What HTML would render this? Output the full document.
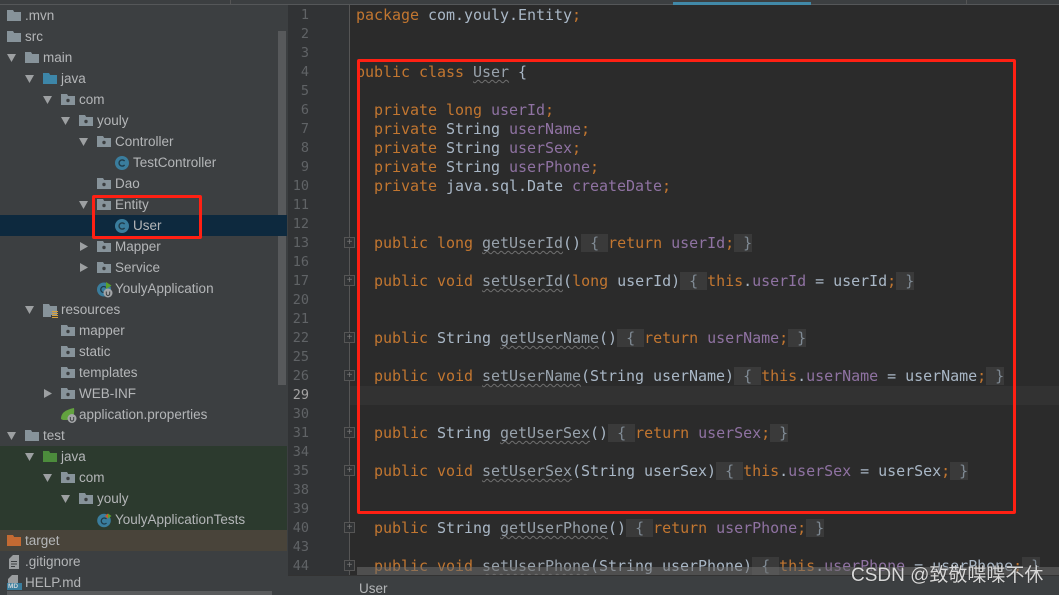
<!DOCTYPE html>
<html><head><meta charset="utf-8">
<style>
html,body{margin:0;padding:0;background:#2b2b2b}
#p{position:relative;width:1059px;height:595px;overflow:hidden;background:#2b2b2b}
.a{position:absolute}
.t{position:absolute;font:13.5px/21px "Liberation Sans",sans-serif;color:#b4b6b8;white-space:pre;height:21px}
.n{position:absolute;left:280px;width:29px;text-align:right;font:13.5px/19px "DejaVu Sans Mono",monospace;color:#606366;height:19px;margin-top:1px}
.c{position:absolute;font:15px/19px "DejaVu Sans Mono",monospace;letter-spacing:-.03px;color:#a9b7c6;white-space:pre;height:19px;margin:1px 0 0}
.c i{font-style:normal;color:#c27630}
.c b{font-weight:normal;color:#8f72a2}
.c u{color:#98a2ac;text-decoration:underline wavy #6f6f6f 1px;text-underline-offset:2px;text-decoration-skip-ink:none}
.c s{text-decoration:none;background:#3a3a3a;color:#7f8a94}
.f{position:absolute;left:344px;width:9px;height:9px;border:1px solid #555;background:#313335;color:#777;font:10px/9px "Liberation Sans",sans-serif;text-align:center}
svg.i{position:absolute;overflow:visible}
</style></head><body>
<div id="p">
<svg width="0" height="0" style="position:absolute">
<defs>
<symbol id="fo" viewBox="0 0 14 11"><path d="M0 0h6l1.2 2H14v9H0z" fill="#87939a"/></symbol>
<symbol id="pk" viewBox="0 0 14 11"><path d="M0 0h6l1.2 2H14v9H0z" fill="#87939a"/><circle cx="7" cy="6.5" r="1.7" fill="#3c3f41"/></symbol>
<symbol id="dn" viewBox="0 0 9 8"><path d="M0 0h9L4.5 8z" fill="#9da0a2"/></symbol>
<symbol id="rt" viewBox="0 0 8 9"><path d="M0 0l8 4.5L0 9z" fill="#9da0a2"/></symbol>
<symbol id="cl" viewBox="0 0 14 14"><circle cx="7" cy="7" r="7" fill="#3a7d9d"/><path d="M9.6 5.1A3.1 3.1 0 1 0 9.6 8.9" fill="none" stroke="#1f3a48" stroke-width="1.4"/></symbol>
</defs>
</svg>

<!-- sidebar -->
<div class="a" style="left:0;top:0;width:288px;height:595px;background:#3c3f41"></div>
<div class="a" style="left:0;top:0;width:1059px;height:4px;background:#3c3f41"></div>
<div class="a" style="left:0;top:4px;width:1059px;height:1px;background:#555759"></div>
<div class="a" style="left:230px;top:0;width:1px;height:4px;background:#555"></div>
<div class="a" style="left:673px;top:2px;width:138px;height:3px;background:#4189a8"></div>
<div class="a" style="left:966px;top:0;width:1px;height:4px;background:#555"></div>
<div class="a" style="left:278px;top:31px;width:8px;height:354px;background:#57595b"></div>
<div class="a" style="left:0;top:215px;width:287px;height:21px;background:#0d293e"></div>
<div class="a" style="left:0;top:446px;width:287px;height:84px;background:#2c3a2e"></div>
<div class="a" style="left:0;top:530px;width:287px;height:21px;background:#49443a"></div>
<div class="a" style="left:7px;top:591px;width:265px;height:4px;background:#595b5d"></div>

<!-- tree arrows -->
<svg class="i" style="left:7px;top:54px" width="9" height="8"><use href="#dn"/></svg>
<svg class="i" style="left:25px;top:75px" width="9" height="8"><use href="#dn"/></svg>
<svg class="i" style="left:43px;top:96px" width="9" height="8"><use href="#dn"/></svg>
<svg class="i" style="left:61px;top:117px" width="9" height="8"><use href="#dn"/></svg>
<svg class="i" style="left:79px;top:138px" width="9" height="8"><use href="#dn"/></svg>
<svg class="i" style="left:79px;top:201px" width="9" height="8"><use href="#dn"/></svg>
<svg class="i" style="left:80px;top:242px" width="8" height="9"><use href="#rt"/></svg>
<svg class="i" style="left:80px;top:263px" width="8" height="9"><use href="#rt"/></svg>
<svg class="i" style="left:25px;top:306px" width="9" height="8"><use href="#dn"/></svg>
<svg class="i" style="left:44px;top:389px" width="8" height="9"><use href="#rt"/></svg>
<svg class="i" style="left:7px;top:432px" width="9" height="8"><use href="#dn"/></svg>
<svg class="i" style="left:25px;top:453px" width="9" height="8"><use href="#dn"/></svg>
<svg class="i" style="left:43px;top:474px" width="9" height="8"><use href="#dn"/></svg>
<svg class="i" style="left:61px;top:495px" width="9" height="8"><use href="#dn"/></svg>

<!-- tree icons -->
<svg class="i" style="left:7px;top:10px" width="14" height="11"><use href="#fo"/></svg>
<svg class="i" style="left:7px;top:31px" width="14" height="11"><use href="#fo"/></svg>
<svg class="i" style="left:25px;top:52px" width="14" height="11"><use href="#fo"/></svg>
<svg class="i" style="left:43px;top:73px" width="14" height="11"><path d="M0 0h6l1.200 2H14v9H0z" fill="#3d86a8"/></svg>
<svg class="i" style="left:61px;top:94px" width="14" height="11"><use href="#pk"/></svg>
<svg class="i" style="left:79px;top:115px" width="14" height="11"><use href="#pk"/></svg>
<svg class="i" style="left:97px;top:136px" width="14" height="11"><use href="#pk"/></svg>
<svg class="i" style="left:115px;top:156px" width="14" height="14"><use href="#cl"/></svg>
<svg class="i" style="left:97px;top:178px" width="14" height="11"><use href="#pk"/></svg>
<svg class="i" style="left:97px;top:199px" width="14" height="11"><use href="#pk"/></svg>
<svg class="i" style="left:115px;top:219px" width="14" height="14"><use href="#cl"/></svg>
<svg class="i" style="left:97px;top:241px" width="14" height="11"><use href="#pk"/></svg>
<svg class="i" style="left:97px;top:262px" width="14" height="11"><use href="#pk"/></svg>
<svg class="i" style="left:97px;top:282px" width="16" height="15"><circle cx="7" cy="7.500" r="7" fill="#3a7d9d"/><path d="M9 5.500A3 3 0 1 0 9 9.500" fill="none" stroke="#1f3a48" stroke-width="1.300"/><path d="M9 0l5.500 3.500L9 7z" fill="#5aa02c"/><circle cx="11" cy="11" r="4.500" fill="#a3a5a7"/><path d="M9.300 9.500v2.300a1.700 1.700 0 0 0 3.400 0V9.500" fill="none" stroke="#3c3f41" stroke-width="1"/></svg>
<svg class="i" style="left:43px;top:304px" width="16" height="15"><path d="M0 0h6l1.200 2H14v9H8v2H0z" fill="#87939a"/><path d="M9 7.500h6M9 9.500h6M9 11.500h6M9 13.500h6" stroke="#d8a13a" stroke-width="1"/></svg>
<svg class="i" style="left:61px;top:325px" width="14" height="11"><use href="#pk"/></svg>
<svg class="i" style="left:61px;top:346px" width="14" height="11"><use href="#pk"/></svg>
<svg class="i" style="left:61px;top:367px" width="14" height="11"><use href="#pk"/></svg>
<svg class="i" style="left:61px;top:388px" width="14" height="11"><use href="#pk"/></svg>
<svg class="i" style="left:61px;top:408px" width="16" height="15"><path d="M0 11C0 5 4 2 13 0c1 6-1 11-7 12H2z" fill="#62a23f"/><circle cx="11" cy="10.500" r="4.500" fill="#a3a5a7"/><path d="M9.300 9v2.300a1.700 1.700 0 0 0 3.400 0V9" fill="none" stroke="#3c3f41" stroke-width="1"/></svg>
<svg class="i" style="left:25px;top:430px" width="14" height="11"><use href="#fo"/></svg>
<svg class="i" style="left:43px;top:451px" width="14" height="11"><path d="M0 0h6l1.200 2H14v9H0z" fill="#4c8c3c"/></svg>
<svg class="i" style="left:61px;top:472px" width="14" height="11"><use href="#pk"/></svg>
<svg class="i" style="left:79px;top:493px" width="14" height="11"><use href="#pk"/></svg>
<svg class="i" style="left:97px;top:513px" width="15" height="14"><circle cx="7" cy="7.500" r="6.800" fill="#3a7d9d"/><path d="M9.500 6A3 3 0 1 0 9.500 10" fill="none" stroke="#1f3a48" stroke-width="1.300"/><path d="M8 3l3-2.500V5.500z" fill="#cc5a2c"/><path d="M11 0.500l3.500 2.500L11 5.500z" fill="#5aa02c"/></svg>
<svg class="i" style="left:7px;top:535px" width="14" height="11"><path d="M0 0h6l1.200 2H14v9H0z" fill="#c36a33"/></svg>
<svg class="i" style="left:9px;top:555px" width="10" height="14"><path d="M4 0h6v14H0V4z" fill="#9a9d9f"/><path d="M2 6.500h6M2 9h6M2 11.500h4" stroke="#3c3f41" stroke-width="1"/></svg>
<svg class="i" style="left:7px;top:575px" width="15" height="15"><path d="M5 0h6v8H1V4z" fill="#9a9d9f"/><rect x="0" y="8" width="15" height="7" fill="#3a7d9d"/></svg>
<div class="a" style="left:8px;top:583px;font:bold 6.500px/7px 'Liberation Sans',sans-serif;color:#cfd6da">MD</div>

<!-- tree labels -->
<div class="t" style="left:25px;top:5px">.mvn</div>
<div class="t" style="left:25px;top:26px">src</div>
<div class="t" style="left:43px;top:47px">main</div>
<div class="t" style="left:61px;top:68px">java</div>
<div class="t" style="left:79px;top:89px">com</div>
<div class="t" style="left:97px;top:110px">youly</div>
<div class="t" style="left:115px;top:131px">Controller</div>
<div class="t" style="left:133px;top:152px">TestController</div>
<div class="t" style="left:115px;top:173px">Dao</div>
<div class="t" style="left:115px;top:194px">Entity</div>
<div class="t" style="left:133px;top:215px">User</div>
<div class="t" style="left:115px;top:236px">Mapper</div>
<div class="t" style="left:115px;top:257px">Service</div>
<div class="t" style="left:115px;top:278px">YoulyApplication</div>
<div class="t" style="left:61px;top:299px">resources</div>
<div class="t" style="left:79px;top:320px">mapper</div>
<div class="t" style="left:79px;top:341px">static</div>
<div class="t" style="left:79px;top:362px">templates</div>
<div class="t" style="left:79px;top:383px">WEB-INF</div>
<div class="t" style="left:79px;top:404px">application.properties</div>
<div class="t" style="left:43px;top:425px">test</div>
<div class="t" style="left:61px;top:446px">java</div>
<div class="t" style="left:79px;top:467px">com</div>
<div class="t" style="left:97px;top:488px">youly</div>
<div class="t" style="left:115px;top:509px">YoulyApplicationTests</div>
<div class="t" style="left:25px;top:530px">target</div>
<div class="t" style="left:25px;top:551px">.gitignore</div>
<div class="t" style="left:25px;top:572px">HELP.md</div>

<!-- gutter -->
<div class="a" style="left:288px;top:5px;width:62px;height:571px;background:#313335"></div>
<div class="a" style="left:349px;top:5px;width:1px;height:571px;background:#555555"></div>
<div class="a" style="left:350px;top:386px;width:709px;height:19px;background:#323232"></div>

<div class="n" style="top:5px">1</div>
<div class="n" style="top:24px">2</div>
<div class="n" style="top:43px">3</div>
<div class="n" style="top:62px">4</div>
<div class="n" style="top:81px">5</div>
<div class="n" style="top:100px">6</div>
<div class="n" style="top:119px">7</div>
<div class="n" style="top:138px">8</div>
<div class="n" style="top:157px">9</div>
<div class="n" style="top:176px">10</div>
<div class="n" style="top:195px">11</div>
<div class="n" style="top:214px">12</div>
<div class="n" style="top:233px">13</div>
<div class="n" style="top:252px">16</div>
<div class="n" style="top:271px">17</div>
<div class="n" style="top:290px">20</div>
<div class="n" style="top:309px">21</div>
<div class="n" style="top:328px">22</div>
<div class="n" style="top:347px">25</div>
<div class="n" style="top:366px">26</div>
<div class="n" style="top:385px;color:#a4a3a3">29</div>
<div class="n" style="top:404px">30</div>
<div class="n" style="top:423px">31</div>
<div class="n" style="top:442px">34</div>
<div class="n" style="top:461px">35</div>
<div class="n" style="top:480px">38</div>
<div class="n" style="top:499px">39</div>
<div class="n" style="top:518px">40</div>
<div class="n" style="top:537px">43</div>
<div class="n" style="top:556px">44</div>

<div class="f" style="top:237px">+</div>
<div class="f" style="top:275px">+</div>
<div class="f" style="top:332px">+</div>
<div class="f" style="top:370px">+</div>
<div class="f" style="top:427px">+</div>
<div class="f" style="top:465px">+</div>
<div class="f" style="top:522px">+</div>
<div class="f" style="top:560px">+</div>

<!-- code -->
<pre class="c" style="left:356px;top:5px"><i>package</i> com.youly.Entity<i>;</i></pre>
<pre class="c" style="left:356px;top:62px"><i>public class</i> <u>User</u> {</pre>
<pre class="c" style="left:374px;top:100px"><i>private long</i> <b>userId</b><i>;</i></pre>
<pre class="c" style="left:374px;top:119px"><i>private</i> String <b>userName</b><i>;</i></pre>
<pre class="c" style="left:374px;top:138px"><i>private</i> String <b>userSex</b><i>;</i></pre>
<pre class="c" style="left:374px;top:157px"><i>private</i> String <b>userPhone</b><i>;</i></pre>
<pre class="c" style="left:374px;top:176px"><i>private</i> java.sql.Date <b>createDate</b><i>;</i></pre>
<pre class="c" style="left:374px;top:233px"><i>public long</i> <u>getUserId</u>()<s> { </s><i>return</i> <b>userId</b><i>;</i><s> }</s></pre>
<pre class="c" style="left:374px;top:271px"><i>public void</i> <u>setUserId</u>(<i>long</i> userId)<s> { </s><i>this</i>.<b>userId</b> = userId<i>;</i><s> }</s></pre>
<pre class="c" style="left:374px;top:328px"><i>public</i> String <u>getUserName</u>()<s> { </s><i>return</i> <b>userName</b><i>;</i><s> }</s></pre>
<pre class="c" style="left:374px;top:366px"><i>public void</i> <u>setUserName</u>(String userName)<s> { </s><i>this</i>.<b>userName</b> = userName<i>;</i><s> }</s></pre>
<pre class="c" style="left:374px;top:423px"><i>public</i> String <u>getUserSex</u>()<s> { </s><i>return</i> <b>userSex</b><i>;</i><s> }</s></pre>
<pre class="c" style="left:374px;top:461px"><i>public void</i> <u>setUserSex</u>(String userSex)<s> { </s><i>this</i>.<b>userSex</b> = userSex<i>;</i><s> }</s></pre>
<pre class="c" style="left:374px;top:518px"><i>public</i> String <u>getUserPhone</u>()<s> { </s><i>return</i> <b>userPhone</b><i>;</i><s> }</s></pre>
<pre class="c" style="left:374px;top:556px"><i>public void</i> <u>setUserPhone</u>(String userPhone)<s> { </s><i>this</i>.<b>userPhone</b> = userPhone<i>;</i><s> }</s></pre>

<!-- editor h-scrollbar + breadcrumb -->
<div class="a" style="left:357px;top:567px;width:702px;height:8px;background:rgba(110,110,110,.55)"></div>
<div class="a" style="left:288px;top:576px;width:771px;height:19px;background:#3c3f41"></div>
<div class="a" style="left:288px;top:575px;width:771px;height:1px;background:#323232"></div>
<div class="t" style="left:359px;top:578px">User</div>

<!-- red annotations -->
<div class="a" style="left:92px;top:195px;width:104px;height:38px;border:3px solid #ff2013;border-radius:2px"></div>
<div class="a" style="left:357px;top:59px;width:653px;height:449px;border:3px solid #ff2013;border-radius:2px"></div>

<!-- watermark -->
<div class="a" style="left:851px;top:564px;font:19px/24px 'Liberation Sans','Noto Sans CJK SC',sans-serif;color:#d8d8d8;white-space:pre;text-shadow:0 0 1px #222">CSDN @致敬喋喋不休</div>
</div>
</body></html>
